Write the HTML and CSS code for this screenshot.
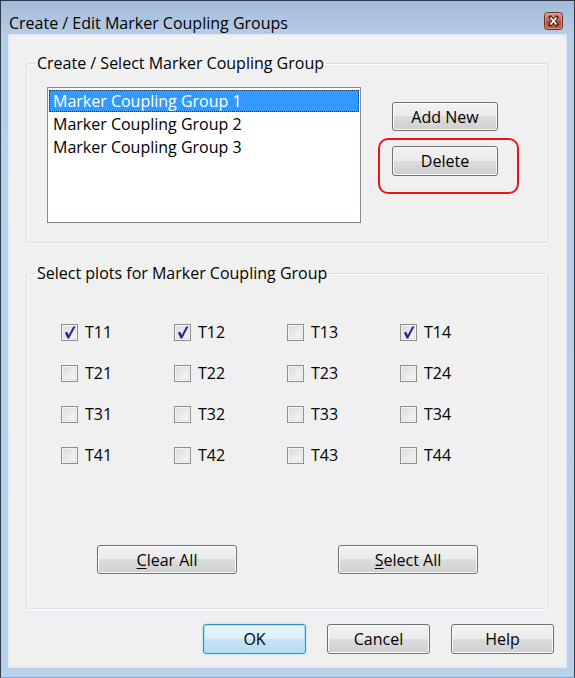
FILE: index.html
```html
<!DOCTYPE html>
<html lang="en">
<head>
    <meta charset="UTF-8">
    <meta name="viewport" content="width=device-width, initial-scale=1.0">
    <title>Create / Edit Marker Coupling Groups</title>
    <link rel="stylesheet" href="styles.css">
</head>
<body>
    <div class="window">
        <div class="titlebar">
            <span class="title">Create / Edit Marker Coupling Groups</span>
            <span class="close-btn">
                <svg width="19" height="18" viewBox="0 0 19 18">
                    <defs>
                        <linearGradient id="cg" x1="0" y1="0" x2="0" y2="1">
                            <stop offset="0" stop-color="#e19a8a"/>
                            <stop offset="0.5" stop-color="#c9624c"/>
                            <stop offset="0.5" stop-color="#b8432c"/>
                            <stop offset="1" stop-color="#c9634a"/>
                        </linearGradient>
                    </defs>
                    <rect x="0.5" y="0.5" width="18" height="17" rx="3" fill="url(#cg)" stroke="#5e3030"/>
                    <rect x="1.5" y="1.5" width="16" height="15" rx="2" fill="none" stroke="#e8b0a4" stroke-opacity="0.6"/>
                    <path d="M6.5 5.5 L12.5 12.5 M12.5 5.5 L6.5 12.5" stroke="#4a2020" stroke-width="3.6" stroke-linecap="square"/>
                    <path d="M6.5 5.5 L12.5 12.5 M12.5 5.5 L6.5 12.5" stroke="#ffffff" stroke-width="1.8"/>
                </svg>
            </span>
        </div>
        <div class="client">
            <fieldset class="group group-select">
                <legend>Create / Select Marker Coupling Group</legend>
                <div class="group-row">
                    <ul class="listbox">
                        <li class="selected">Marker Coupling Group 1</li>
                        <li>Marker Coupling Group 2</li>
                        <li>Marker Coupling Group 3</li>
                    </ul>
                    <div class="side-buttons">
                        <button class="btn btn-side">Add New</button>
                        <div class="mark-wrap">
                            <button class="btn btn-side btn-delete">Delete</button>
                            <span class="mark"></span>
                        </div>
                    </div>
                </div>
            </fieldset>

            <fieldset class="group group-plots">
                <legend>Select plots for Marker Coupling Group</legend>
                <div class="plot-grid">
                    <label class="check"><span class="box checked"><svg width="12" height="13" viewBox="0 0 11 12"><path d="M0.8 6.2 L3 5.4 L4.3 8.2 L8.5 0.4 L10.6 0.4 L4.7 11.6 L3.3 11.6 Z" fill="#23268a"/></svg></span>T11</label>
                    <label class="check"><span class="box checked"><svg width="12" height="13" viewBox="0 0 11 12"><path d="M0.8 6.2 L3 5.4 L4.3 8.2 L8.5 0.4 L10.6 0.4 L4.7 11.6 L3.3 11.6 Z" fill="#23268a"/></svg></span>T12</label>
                    <label class="check"><span class="box"></span>T13</label>
                    <label class="check"><span class="box checked"><svg width="12" height="13" viewBox="0 0 11 12"><path d="M0.8 6.2 L3 5.4 L4.3 8.2 L8.5 0.4 L10.6 0.4 L4.7 11.6 L3.3 11.6 Z" fill="#23268a"/></svg></span>T14</label>

                    <label class="check"><span class="box"></span>T21</label>
                    <label class="check"><span class="box"></span>T22</label>
                    <label class="check"><span class="box"></span>T23</label>
                    <label class="check"><span class="box"></span>T24</label>

                    <label class="check"><span class="box"></span>T31</label>
                    <label class="check"><span class="box"></span>T32</label>
                    <label class="check"><span class="box"></span>T33</label>
                    <label class="check"><span class="box"></span>T34</label>

                    <label class="check"><span class="box"></span>T41</label>
                    <label class="check"><span class="box"></span>T42</label>
                    <label class="check"><span class="box"></span>T43</label>
                    <label class="check"><span class="box"></span>T44</label>
                </div>
                <div class="plot-buttons">
                    <button class="btn btn-wide"><u>C</u>lear All</button>
                    <button class="btn btn-wide"><u>S</u>elect All</button>
                </div>
            </fieldset>

            <div class="dialog-buttons">
                <button class="btn btn-dialog btn-default">OK</button>
                <button class="btn btn-dialog">Cancel</button>
                <button class="btn btn-dialog">Help</button>
            </div>
        </div>
    </div>
</body>
</html>
```

FILE: styles.css
```css
body {
    margin: 0;
    font-family: "Open Sans", "Noto Sans", sans-serif;
    font-size: 16px;
    color: #000;
}
.window {
    width: 575px;
    height: 678px;
    box-sizing: border-box;
    border: 1px solid #2e3b4a;
    border-bottom-color: #3bbfe2;
    background: linear-gradient(to bottom, #a3bcda 0, #b6cde7 34px, #bad1ea 100%);
}
.titlebar {
    height: 34px;
    box-sizing: border-box;
    display: flex;
    align-items: flex-start;
    padding: 11px 11px 0 8px;
}
.title {
    line-height: 20px;
    margin-top: 1px;
    color: #000;
}
.close-btn {
    margin-left: auto;
    height: 18px;
}
.close-btn svg {
    display: block;
}
.client {
    margin: 0 8px;
    height: 632px;
    box-sizing: border-box;
    padding: 0 17px;
    background: #f0f0f0;
    box-shadow: 0 0 0 1px #dce8f4;
    overflow: hidden;
}
.group {
    margin: 0;
    min-width: 0;
    border: 1px solid #d5dfe5;
    border-radius: 3px;
    box-shadow: inset 1px 1px 0 #fff, 1px 1px 0 #fff;
}
.group legend {
    padding: 0 2px;
    line-height: 20px;
    color: #000;
}
.group-select {
    margin-top: 18px;
    padding: 14px 20px 19px 20px;
}
.group-select legend {
    margin-left: -12px;
}
.group-row {
    display: flex;
    align-items: flex-start;
}
.listbox {
    list-style: none;
    margin: 0;
    width: 314px;
    height: 136px;
    box-sizing: border-box;
    padding: 2px 1px;
    background: #fff;
    border: 1px solid #828790;
}
.listbox li {
    height: 23px;
    line-height: 22px;
    padding-left: 4px;
    box-sizing: border-box;
}
.listbox li.selected {
    background: #3399ff;
    color: #fff;
    outline: 1px dotted #0c2f66;
    outline-offset: -1px;
    height: 22px;
    margin-bottom: 1px;
}
.side-buttons {
    margin-left: 31px;
    padding-top: 15px;
    display: flex;
    flex-direction: column;
    gap: 15px;
}
.btn {
    font-family: "Open Sans", "Noto Sans", sans-serif;
    font-size: 16px;
    color: #000;
    padding: 0;
    border: 1px solid #707070;
    border-radius: 3px;
    background: linear-gradient(to bottom, #f2f2f2 0%, #ebebeb 50%, #dddddd 50%, #cfcfcf 100%);
    box-shadow: inset 0 0 0 1px #fbfbfb;
    cursor: pointer;
}
.btn u {
    text-underline-offset: 2px;
}
.btn-side {
    width: 106px;
    height: 29px;
}
.btn-delete {
    height: 30px;
}
.mark-wrap {
    position: relative;
}
.mark {
    position: absolute;
    left: -14px;
    top: -8px;
    width: 141px;
    height: 56px;
    box-sizing: border-box;
    border: 2px solid #e8151d;
    border-radius: 10px;
}
.group-plots {
    margin-top: 20px;
    padding: 40px 20px 34px 34px;
}
.group-plots legend {
    margin-left: -26px;
}
.plot-grid {
    display: grid;
    grid-template-columns: repeat(4, 113px);
    grid-auto-rows: 18px;
    row-gap: 23px;
}
.check {
    display: flex;
    align-items: center;
    gap: 7px;
    line-height: 18px;
}
.box {
    width: 17px;
    height: 17px;
    box-sizing: border-box;
    border: 1px solid #8f8f8f;
    background: linear-gradient(135deg, #d8d8d8 0%, #eeeeee 60%, #fafafa 100%);
    box-shadow: inset 0 0 0 1px #f4f4f4, inset 0 0 0 2px #e2e2e2;
    display: flex;
    align-items: center;
    justify-content: center;
}
.box svg {
    display: block;
}
.plot-buttons {
    margin-top: 81px;
    margin-left: 36px;
    display: flex;
    gap: 101px;
}
.btn-wide {
    width: 140px;
    height: 29px;
}
.dialog-buttons {
    margin-top: 15px;
    margin-right: -5px;
    display: flex;
    justify-content: flex-end;
    gap: 21px;
}
.btn-dialog {
    width: 103px;
    height: 30px;
}
.btn-default {
    border-color: #3c8fc4;
    background: linear-gradient(to bottom, #eaf6fd 0%, #dbeffa 50%, #c8e4f5 50%, #b6dbf0 100%);
    box-shadow: inset 0 0 0 1px #a6e2fb, 0 0 2px #7fd0f3;
}
```
